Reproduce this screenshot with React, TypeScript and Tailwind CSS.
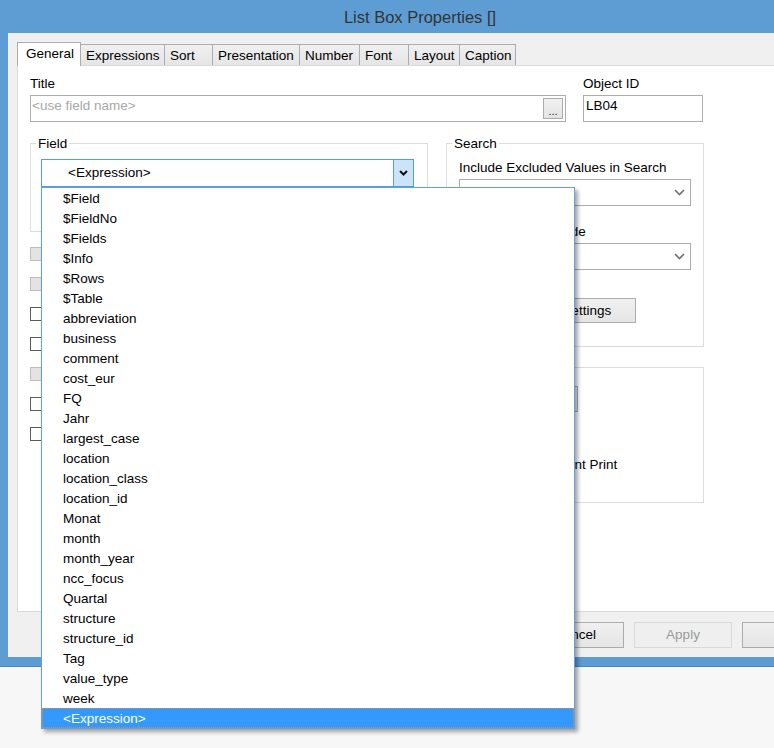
import React from "react";

const items = [
  "$Field", "$FieldNo", "$Fields", "$Info", "$Rows", "$Table", "abbreviation", "business",
  "comment", "cost_eur", "FQ", "Jahr", "largest_case", "location", "location_class",
  "location_id", "Monat", "month", "month_year", "ncc_focus", "Quartal", "structure",
  "structure_id", "Tag", "value_type", "week", "<Expression>",
];

const tabs: { label: string; w: string }[] = [
  { label: "Expressions", w: "w-[84px]" },
  { label: "Sort", w: "w-[48px]" },
  { label: "Presentation", w: "w-[87px]" },
  { label: "Number", w: "w-[60px]" },
  { label: "Font", w: "w-[49px]" },
  { label: "Layout", w: "w-[51px]" },
  { label: "Caption", w: "w-[56px]" },
];

function GrayChevron() {
  return (
    <svg width="11" height="7" viewBox="0 0 11 7">
      <polyline points="1,1 5.5,5.5 10,1" fill="none" stroke="#6e6e6e" strokeWidth="1.6" />
    </svg>
  );
}

function BlackChevron() {
  return (
    <svg width="9" height="6" viewBox="0 0 9 6">
      <polyline points="1,1 4.5,4.5 8,1" fill="none" stroke="#111" strokeWidth="2" />
    </svg>
  );
}

function Select() {
  return (
    <div className="w-[232px] h-[27px] border border-[#acacac] bg-white flex items-center justify-end pr-[5px]">
      <GrayChevron />
    </div>
  );
}

function Checkbox({ disabled }: { disabled?: boolean }) {
  return (
    <div
      className={
        disabled
          ? "w-[13px] h-[14px] border border-[#bdbdbd] bg-[#e3e3e3]"
          : "w-[13px] h-[14px] border border-[#5a5a5a] bg-white"
      }
    />
  );
}

export default function App() {
  return (
    <div className="relative w-[774px] h-[748px] overflow-hidden bg-[#f7f7f7] font-['Liberation_Sans',Arial,sans-serif] text-[13.5px] text-black">
      {/* window */}
      <div className="w-[850px] h-[667px] bg-[#5e9dd4] border-b border-[#4c86ba]">
        {/* title bar */}
        <div className="h-[33px] flex items-center justify-center pr-[10px] pt-[1px] text-[16.5px] text-[#333333]">
          List Box Properties []
        </div>
        {/* client */}
        <div className="ml-[8px] mr-[8px] h-[624px] bg-[#f0f0f0] flex flex-col pt-[9px] pl-[9px] pr-[2px]">
          {/* tabs */}
          <div className="h-[23px] flex items-end relative z-10">
            <div className="w-[64px] h-[24px] -mb-[1px] bg-white border-l border-t border-r border-[#acacac] pl-[8px] leading-[22px]">
              General
            </div>
            {tabs.map((t) => (
              <div
                key={t.label}
                className={`${t.w} h-[21px] border-t border-r border-[#acacac] bg-gradient-to-b from-[#f0f0f0] to-[#e5e5e5] pl-[5px] leading-[21px]`}
              >
                {t.label}
              </div>
            ))}
          </div>
          {/* panel */}
          <div className="mr-[7px] h-[547px] bg-white border-l border-t border-b border-[#d9d9d9] pl-[12px] pt-[9px]">
            {/* row 1 */}
            <div className="flex">
              <div className="w-[536px]">
                <div className="h-[16px] leading-[16px] pt-[1px]">Title</div>
                <div className="mt-[4px] h-[27px] border border-[#acacac] bg-white flex">
                  <span className="flex-1 pl-[1px] pt-[2px] leading-[16px] text-[#a8a8a8]">&lt;use field name&gt;</span>
                  <div className="self-center mr-[2px] w-[20px] h-[21px] border border-[#acacac] bg-gradient-to-b from-[#f2f2f2] to-[#e3e3e3] flex items-end justify-center text-[11px] leading-[14px] text-[#222]">
                    ...
                  </div>
                </div>
              </div>
              <div className="ml-[17px] w-[120px]">
                <div className="h-[16px] leading-[16px] pt-[1px]">Object ID</div>
                <div className="mt-[4px] h-[27px] border border-[#acacac] bg-white pl-[2px] pt-[2px] leading-[16px]">LB04</div>
              </div>
            </div>
            {/* row 2 */}
            <div className="flex mt-[13px]">
              {/* left column */}
              <div className="w-[398px]">
                <fieldset className="border border-[#dcdcdc] pl-[10px] pt-[8px] pb-[44px]">
                  <legend className="-ml-[5px] px-[2px] h-[16px] leading-[18px]">Field</legend>
                  <div className="w-[373px] h-[28px] border border-[#569de5] bg-white flex items-center">
                    <span className="flex-1 pl-[26px] pt-[1px]">&lt;Expression&gt;</span>
                    <div className="w-[20px] h-full bg-[#cce4f7] border-l border-[#569de5] flex items-center justify-center">
                      <BlackChevron />
                    </div>
                  </div>
                </fieldset>
                <div className="mt-[15px] flex flex-col gap-[16px]">
                  <Checkbox disabled />
                  <Checkbox disabled />
                  <Checkbox />
                  <Checkbox />
                  <Checkbox disabled />
                  <Checkbox />
                  <Checkbox />
                </div>
              </div>
              {/* right column */}
              <div className="ml-[18px] w-[258px]">
                <fieldset className="border border-[#dcdcdc] pl-[12px] pt-[8px] pb-[23px]">
                  <legend className="-ml-[7px] px-[2px] h-[16px] leading-[18px]">Search</legend>
                  <div className="h-[16px] leading-[16px] pt-[1px]">Include Excluded Values in Search</div>
                  <div className="mt-[4px]">
                    <Select />
                  </div>
                  <div className="mt-[18px] h-[16px] leading-[16px]">Default Search Mode</div>
                  <div className="mt-[3px]">
                    <Select />
                  </div>
                  <div className="mt-[28px] ml-[32px] w-[145px] h-[25px] border border-[#acacac] bg-gradient-to-b from-[#f0f0f0] to-[#e5e5e5] flex items-center justify-center pt-[1px]">
                    Search Settings
                  </div>
                </fieldset>
                <div className="mt-[20px] h-[136px] border border-[#dcdcdc] pl-[12px] pt-[18px]">
                  <div className="w-[119px] h-[26px] border border-[#acacac] bg-gradient-to-b from-[#f0f0f0] to-[#e5e5e5] flex items-center justify-center">
                    Print Settings
                  </div>
                  <div className="mt-[45px] h-[16px] leading-[16px] pl-[3px] whitespace-nowrap">Show in Transparent Print</div>
                </div>
              </div>
            </div>
          </div>
          {/* buttons */}
          <div className="pt-[10px] flex justify-end gap-[10px]">
            <div className="w-[98px] h-[26px] border border-[#acacac] bg-gradient-to-b from-[#f0f0f0] to-[#e5e5e5] flex items-center justify-center">OK</div>
            <div className="w-[98px] h-[26px] border border-[#acacac] bg-gradient-to-b from-[#f0f0f0] to-[#e5e5e5] flex items-center justify-center pt-[1px]">Cancel</div>
            <div className="w-[98px] h-[26px] border border-[#d9d9d9] bg-[#efefef] flex items-center justify-center pt-[1px] text-[#9a9a9a]">Apply</div>
            <div className="w-[98px] h-[26px] border border-[#acacac] bg-gradient-to-b from-[#f0f0f0] to-[#e5e5e5]" />
          </div>
        </div>
      </div>

      {/* dropdown list overlay */}
      <div className="absolute left-[41px] top-[187px] w-[534px] border border-[#64a0dc] bg-white shadow-[3px_3px_4px_rgba(0,0,0,0.35)]">
        {items.map((it, i) =>
          i === items.length - 1 ? (
            <div key={it} className="h-[20px] leading-[18px] pl-[20px] pt-[1px] bg-[#3399ff] text-white border border-dotted border-[#d98a4a]">
              {it}
            </div>
          ) : (
            <div key={it} className="h-[20px] leading-[20px] pl-[21px] pt-[1px]">
              {it}
            </div>
          )
        )}
      </div>
    </div>
  );
}
